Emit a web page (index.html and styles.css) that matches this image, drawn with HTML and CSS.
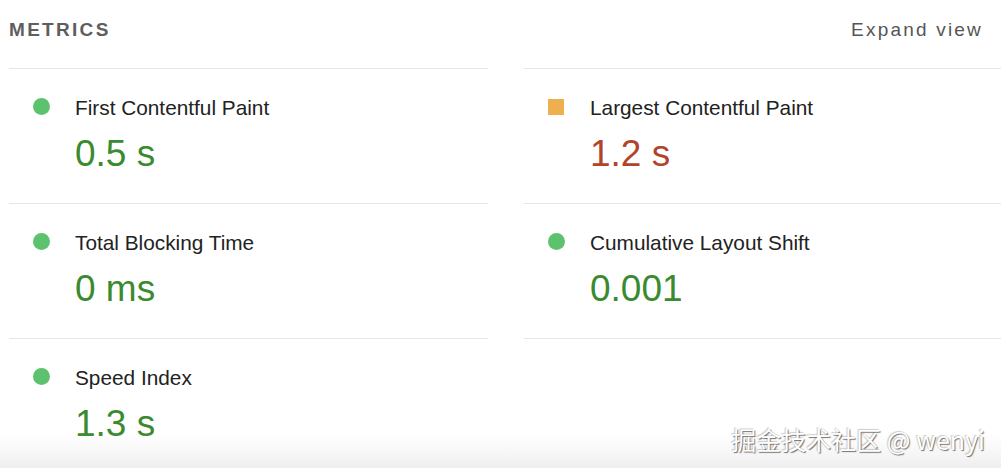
FILE: index.html
```html
<!DOCTYPE html>
<html lang="en">
<head>
    <meta charset="UTF-8">
    <title>Metrics</title>
    <meta name="viewport" content="width=device-width, initial-scale=1.0">
    <link rel="stylesheet" href="styles.css">
</head>
<body>
    <div class="page">
        <div class="metrics-header">
            <span class="metrics-title">METRICS</span>
            <span class="expand-link">Expand view</span>
        </div>

        <div class="metrics-grid">
            <div class="metric">
                <span class="icon pass"></span>
                <div class="metric-label">First Contentful Paint</div>
                <div class="metric-value pass-text">0.5 s</div>
            </div>
            <div class="metric">
                <span class="icon average"></span>
                <div class="metric-label">Largest Contentful Paint</div>
                <div class="metric-value average-text">1.2 s</div>
            </div>
            <div class="metric">
                <span class="icon pass"></span>
                <div class="metric-label">Total Blocking Time</div>
                <div class="metric-value pass-text">0 ms</div>
            </div>
            <div class="metric">
                <span class="icon pass"></span>
                <div class="metric-label">Cumulative Layout Shift</div>
                <div class="metric-value pass-text">0.001</div>
            </div>
            <div class="metric">
                <span class="icon pass"></span>
                <div class="metric-label">Speed Index</div>
                <div class="metric-value pass-text">1.3 s</div>
            </div>
            <div class="metric empty"></div>
        </div>

        <div class="watermark">掘金技术社区 @ wenyi</div>
    </div>
</body>
</html>
```

FILE: styles.css
```css
html, body {
    margin: 0;
    padding: 0;
    background-color: #fff;
}

body {
    font-family: "Liberation Sans", Arial, sans-serif;
    color: #212121;
}

.page {
    position: relative;
    width: 1001px;
    height: 468px;
    overflow: hidden;
}

/* faded strip at the bottom of the capture */
.page::after {
    content: "";
    position: absolute;
    left: 0;
    right: 0;
    bottom: 0;
    height: 34px;
    background: linear-gradient(to bottom, rgba(240, 240, 240, 0), #efefef);
    pointer-events: none;
}

.metrics-header {
    display: flex;
    justify-content: space-between;
    height: 68px;
    padding: 20px 18px 0 9px;
    box-sizing: border-box;
    line-height: 20px;
    font-size: 19px;
}

.metrics-title {
    font-weight: bold;
    letter-spacing: 2.3px;
    color: #5e5e5e;
}

.expand-link {
    letter-spacing: 2.2px;
    color: #555;
}

.metrics-grid {
    display: grid;
    grid-template-columns: 479px 1fr;
    column-gap: 36px;
    padding-left: 9px;
}

.metric {
    display: grid;
    grid-template-columns: 42px 1fr;
    align-content: start;
    height: 135px;
    box-sizing: border-box;
    padding: 27px 0 0 24px;
    border-top: 1px solid #e6e6e6;
}

.icon {
    grid-row: 1;
    grid-column: 1;
    align-self: start;
}

.icon.pass {
    width: 17px;
    height: 17px;
    margin-top: 2px;
    border-radius: 50%;
    background-color: #5dc26e;
}

.icon.average {
    width: 16px;
    height: 16px;
    margin-top: 3px;
    background-color: #efaf4f;
}

.metric-label {
    grid-row: 1;
    grid-column: 2;
    font-size: 20.8px;
    line-height: 24px;
    color: #222;
}

.metric-value {
    grid-row: 2;
    grid-column: 2;
    margin-top: 12px;
    font-size: 37px;
    line-height: 44px;
}

.pass-text {
    color: #3a8a2f;
}

.average-text {
    color: #b3432a;
}

.watermark {
    position: absolute;
    right: 16px;
    bottom: 14px;
    z-index: 1;
    font-family: "Noto Sans CJK SC", "Noto Sans", sans-serif;
    font-size: 25px;
    line-height: 30px;
    color: #fff;
    text-shadow: 1px 1px 1px rgba(0, 0, 0, 0.55), -1px -1px 1px rgba(0, 0, 0, 0.2);
}
```
